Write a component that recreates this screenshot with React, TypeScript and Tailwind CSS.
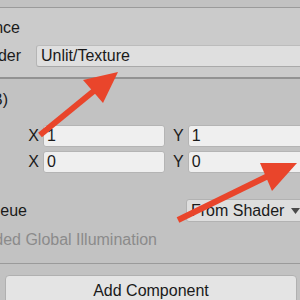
import React from 'react';

// Cut-off label: the box ends where the visible text ends, text spills to the left.
const Label: React.FC<{ end: number; text: string; dim?: boolean }> = ({ end, text, dim }) => (
  <div
    className={`flex justify-end whitespace-nowrap shrink-0 ${dim ? 'text-[#8b8b8b]' : ''}`}
    style={{ width: end }}
  >
    {text}
  </div>
);

const Field: React.FC<{ value: string; w: string }> = ({ value, w }) => (
  <div className={`${w} h-[22px] shrink-0 rounded-[3px] border border-[#b4b4b4] bg-[#efefef] pl-[3px] leading-[20px]`}>
    {value}
  </div>
);

const VectorRow: React.FC<{ x: string; y: string }> = ({ x, y }) => (
  <div className="flex items-center h-[22px]">
    <Label end={39} text="X" />
    <div className="ml-[4px]">
      <Field value={x} w="w-[122px]" />
    </div>
    <div className="ml-[8px]">Y</div>
    <div className="ml-[4px]">
      <Field value={y} w="w-[130px]" />
    </div>
  </div>
);

const Arrows = () => (
  <svg className="absolute inset-0 pointer-events-none" width="300" height="300" viewBox="0 0 300 300">
    <line x1="40" y1="135" x2="95" y2="90" stroke="#e9452b" strokeWidth="6" />
    <polygon points="118,72 83,80 103,103" fill="#e9452b" />
    <line x1="178" y1="220" x2="268" y2="176" stroke="#e9452b" strokeWidth="6" />
    <polygon points="297,163 260,163 272,191" fill="#e9452b" />
  </svg>
);

export default function App() {
  return (
    <div className="relative w-[300px] h-[300px] overflow-hidden bg-[#c2c2c2] text-[#1a1a1a] text-[16px] leading-none font-['Liberation_Sans',Arial,sans-serif]">
      <div className="h-[8px] border-b border-[#9b9b9b]" />

      {/* material header */}
      <div className="h-[71px] bg-[#cbcbcb] border-b-2 border-[#929292]">
        <div className="pt-[12px] h-[37px]">
          <Label end={20} text="Instance" />
        </div>
        <div className="flex items-center h-[22px]">
          <Label end={21} text="Shader" />
          <div className="ml-[15px] h-[22px] flex-1 rounded-l-[3px] border-t border-b border-l border-t-[#bcbcbc] border-b-[#a9a9a9] border-l-[#b5b5b5] bg-[#dfdfdf] pl-[4px] leading-[20px]">
            Unlit/Texture
          </div>
        </div>
      </div>

      <div className="mt-[13px] h-[16px]">
        <Label end={8} text="Base (RGB)" />
      </div>

      <div className="mt-[17px]">
        <VectorRow x="1" y="1" />
      </div>
      <div className="mt-[4px]">
        <VectorRow x="0" y="0" />
      </div>

      <div className="mt-[26px] flex items-center h-[23px]">
        <Label end={27} text="Render Queue" />
        <div className="ml-[159px] w-[122px] h-[23px] shrink-0 flex items-center rounded-[3px] border border-[#b2b2b2] bg-[#dedede] pl-[4px] pr-[7px]">
          <span>From Shader</span>
          <svg className="ml-auto" width="9" height="6" viewBox="0 0 9 6">
            <polygon points="0,0 9,0 4.5,6" fill="#4a4a4a" />
          </svg>
        </div>
      </div>

      <div className="mt-[10px] h-[16px]">
        <Label end={157} text="Double Sided Global Illumination" dim />
      </div>

      <div className="mt-[15px] border-b border-[#9a9a9a]" />

      <div className="mt-[11px] ml-[5px] w-[292px] h-[32px] rounded-[4px] border border-[#b0b0b0] bg-[#e4e4e4] flex justify-center pt-[7px]">
        Add Component
      </div>

      <Arrows />
    </div>
  );
}
